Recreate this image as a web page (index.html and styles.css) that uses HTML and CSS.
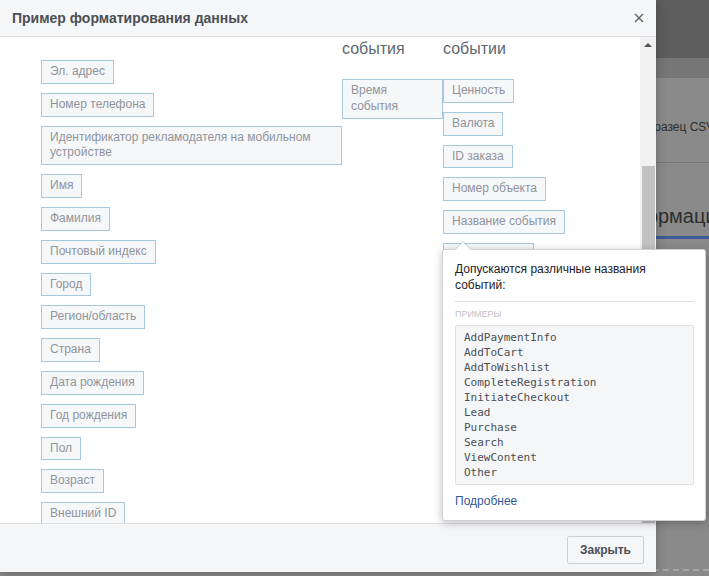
FILE: index.html
```html
<!DOCTYPE html>
<html lang="ru">
<head>
<meta charset="utf-8">
<title>Пример форматирования данных</title>
<link rel="stylesheet" href="styles.css">
</head>
<body>
<div class="page">
  <div class="bg">
    <div class="bg-top"></div>
    <div class="bg-band"></div>
    <div class="bg-sample"><span>Образец CSV</span></div>
    <div class="bg-tabs"><span class="bg-tab">Информация</span></div>
    <div class="bg-rest"></div>
    <div class="bg-dash"></div>
  </div>

  <div class="dialog">
    <div class="dlg-head">
      <span class="dlg-title">Пример форматирования данных</span>
      <svg class="dlg-close" width="10" height="10" viewBox="0 0 10 10"><path d="M1 1L9 9M9 1L1 9" stroke="#606770" stroke-width="1.5" fill="none"/></svg>
    </div>
    <div class="dlg-body">
      <div class="scroll-view">
        <div class="scroll-content">
          <div class="col col-1">
            <span class="chip">Эл. адрес</span>
            <span class="chip">Номер телефона</span>
            <span class="chip">Идентификатор рекламодателя на мобильном устройстве</span>
            <span class="chip">Имя</span>
            <span class="chip">Фамилия</span>
            <span class="chip">Почтовый индекс</span>
            <span class="chip">Город</span>
            <span class="chip">Регион/область</span>
            <span class="chip">Страна</span>
            <span class="chip">Дата рождения</span>
            <span class="chip">Год рождения</span>
            <span class="chip">Пол</span>
            <span class="chip">Возраст</span>
            <span class="chip">Внешний ID</span>
          </div>
          <div class="col col-2">
            <div class="col-head">Время<br>события</div>
            <span class="chip chip-wide">Время<br>события</span>
          </div>
          <div class="col col-3">
            <div class="col-head">Информация о<br>событии</div>
            <span class="chip">Ценность</span>
            <span class="chip">Валюта</span>
            <span class="chip">ID заказа</span>
            <span class="chip">Номер объекта</span>
            <span class="chip">Название события</span>
            <span class="chip">Тип контента</span>
            <span class="chip">Количество</span>
            <span class="chip">Категория</span>
          </div>
        </div>
      </div>
      <div class="scrollbar">
        <div class="sb-btn"><span class="sb-arrow"></span></div>
        <div class="sb-thumb"></div>
      </div>
    </div>
    <div class="dlg-foot">
      <button class="btn">Закрыть</button>
    </div>
  </div>

  <div class="tooltip">
    <div class="tt-text">Допускаются различные названия<br>событий:</div>
    <div class="tt-rule"></div>
    <div class="tt-label">Примеры</div>
    <pre class="tt-code">AddPaymentInfo
AddToCart
AddToWishlist
CompleteRegistration
InitiateCheckout
Lead
Purchase
Search
ViewContent
Other</pre>
    <a class="tt-link" href="#">Подробнее</a>
  </div>
</div>
</body>
</html>
```

FILE: styles.css
```css
* { box-sizing: border-box; }
html, body { margin: 0; padding: 0; }
body {
  width: 709px;
  height: 576px;
  overflow: hidden;
  font-family: "Liberation Sans", Arial, sans-serif;
}
.page {
  position: relative;
  width: 709px;
  height: 576px;
  overflow: hidden;
}

/* background page under overlay */
.bg {
  display: flex;
  flex-direction: column;
  height: 576px;
  background: #8a8a8a;
}
.bg-top { height: 58px; background: #5e5e5e; }
.bg-band { height: 20px; background: #767676; }
.bg-sample {
  height: 85px;
  padding: 41px 0 0 638px;
  border-bottom: 1px solid #747474;
  font-size: 12px;
  line-height: 16px;
  color: #2e2e2e;
  white-space: nowrap;
}
.bg-tabs {
  height: 75px;
  padding: 41px 0 0 605px;
  white-space: nowrap;
}
.bg-tab {
  display: inline-block;
  font-size: 20px;
  line-height: 24px;
  color: #2e2e2e;
  padding-bottom: 8px;
  border-bottom: 3px solid #3e5b97;
}
.bg-rest { flex: 1; }
.bg-dash {
  height: 1px;
  margin-bottom: 5px;
  border-top: 2px dashed #a6a6a6;
}

/* dialog */
.dialog {
  position: absolute;
  left: 0;
  top: 0;
  width: 656px;
  height: 572px;
  background: #fff;
  display: flex;
  flex-direction: column;
  box-shadow: 0 2px 10px rgba(0,0,0,.25);
}
.dlg-head {
  height: 37px;
  flex: none;
  background: #f5f6f7;
  border-bottom: 1px solid #dddfe2;
  display: flex;
  align-items: center;
  justify-content: space-between;
  padding: 0 12px;
}
.dlg-title {
  font-size: 14px;
  line-height: 16px;
  font-weight: bold;
  color: #4b4f56;
}
.dlg-close { display: block; }

.dlg-body {
  flex: 1;
  display: flex;
  min-height: 0;
}
.scroll-view {
  flex: 1;
  overflow: hidden;
}
.scroll-content {
  margin-top: -18px;
  padding-left: 41px;
  display: grid;
  grid-template-columns: 301px 101px 1fr;
  align-items: start;
}
.col {
  display: flex;
  flex-direction: column;
  align-items: flex-start;
  gap: 9px;
}
.col-1 { padding-top: 41px; }
.col-head {
  font-size: 16px;
  line-height: 20px;
  height: 40px;
  margin-bottom: 11px;
  color: #606770;
  white-space: nowrap;
}
.chip {
  display: inline-block;
  max-width: 100%;
  padding: 3px 8px;
  font-size: 12px;
  line-height: 15.8px;
  color: #90949c;
  background: #f6f7f9;
  border: 1px solid #a6c8df;
}
.chip-wide { align-self: stretch; }

.scrollbar {
  width: 16px;
  flex: none;
  background: #f1f1f1;
  display: flex;
  flex-direction: column;
}
.sb-btn {
  height: 16px;
  display: flex;
  align-items: center;
  justify-content: center;
}
.sb-arrow {
  width: 0;
  height: 0;
  border-left: 4px solid transparent;
  border-right: 4px solid transparent;
  border-bottom: 4px solid #505050;
}
.sb-thumb {
  margin: 113px 1px 0 2px;
  flex: 1;
  background: #c1c1c1;
}

.dlg-foot {
  flex: none;
  height: 49px;
  background: #f5f6f7;
  border-top: 1px solid #dddfe2;
  display: flex;
  justify-content: flex-end;
  align-items: flex-start;
  padding: 12px 12px 0;
}
.btn {
  height: 28px;
  padding: 0 12px;
  font-family: "Liberation Sans", Arial, sans-serif;
  font-size: 12px;
  font-weight: bold;
  color: #4b4f56;
  background: #f5f6f7;
  border: 1px solid #ccd0d5;
  border-radius: 2px;
}

/* tooltip */
.tooltip {
  position: absolute;
  left: 442px;
  top: 249px;
  width: 264px;
  padding: 11px 11px 11px 12px;
  background: #fff;
  border: 1px solid rgba(0,0,0,.18);
  border-radius: 3px;
  box-shadow: 0 2px 8px rgba(0,0,0,.25);
}
.tooltip::before,
.tooltip::after {
  content: "";
  position: absolute;
  left: 12px;
  width: 0;
  height: 0;
  border-left: 8px solid transparent;
  border-right: 8px solid transparent;
}
.tooltip::before {
  top: -9px;
  border-bottom: 8px solid rgba(0,0,0,.2);
}
.tooltip::after {
  top: -8px;
  border-bottom: 8px solid #fff;
}
.tt-text {
  font-size: 12px;
  line-height: 16px;
  color: #1d2129;
}
.tt-rule {
  height: 1px;
  margin-top: 8px;
  background: #dddfe2;
}
.tt-label {
  margin-top: 6px;
  font-size: 9px;
  line-height: 12px;
  text-transform: uppercase;
  color: #bec2c9;
}
.tt-code {
  margin: 5px 0 0;
  padding: 4px 8px;
  background: #f5f6f7;
  border: 1px solid #dddfe2;
  border-radius: 2px;
  font-family: "DejaVu Sans Mono", monospace;
  font-size: 11px;
  line-height: 15px;
  color: #4b4f56;
}
.tt-link {
  display: block;
  margin-top: 8px;
  font-size: 12px;
  line-height: 16px;
  color: #365899;
  text-decoration: none;
}
```
